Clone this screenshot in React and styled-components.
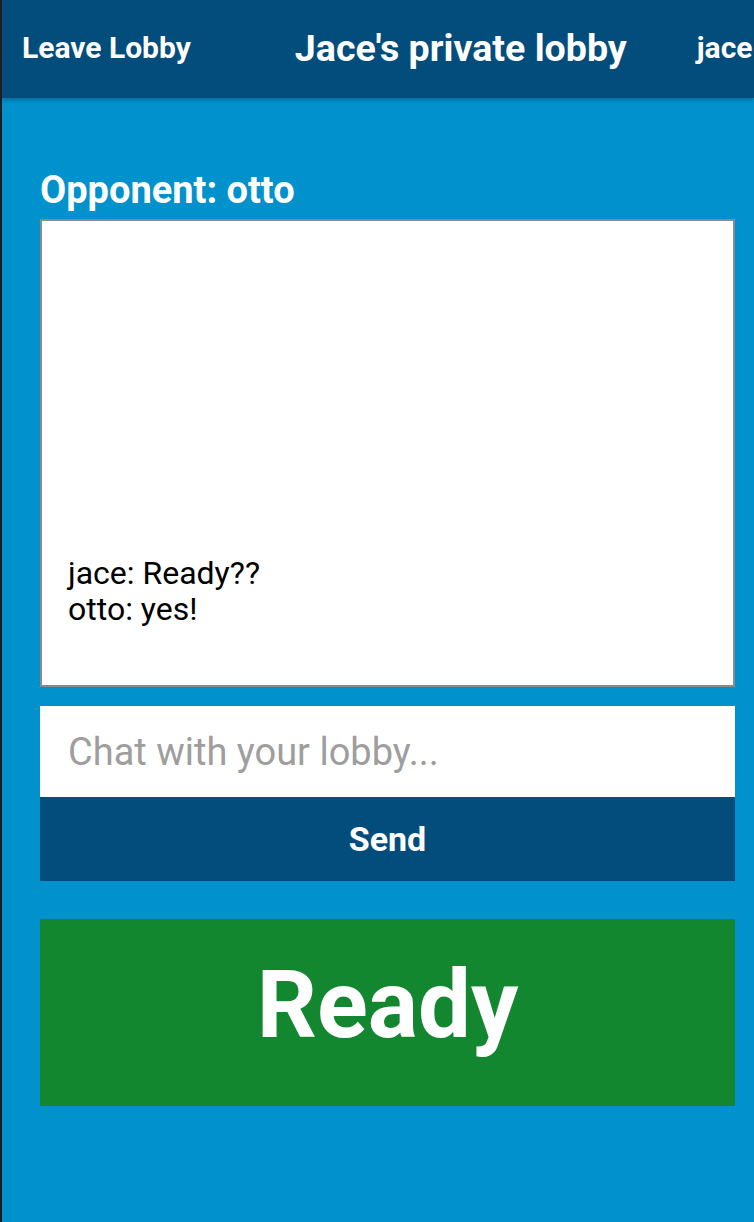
import React from 'react'
import styled, { createGlobalStyle } from 'styled-components'

const GlobalStyle = createGlobalStyle`
  html, body {
    margin: 0;
    padding: 0;
    background: #0191cd;
  }
  body {
    font-family: Roboto, "Noto Sans", sans-serif;
  }
  * {
    box-sizing: border-box;
  }
`

const Page = styled.div`
  min-height: 1222px;
  background: #0191cd;
  border-left: 2px solid #1b1f23;
  overflow: hidden;
`
const Header = styled.div`
  height: 98px;
  background: #034d7c;
  display: flex;
  align-items: center;
  padding-left: 20px;
  box-shadow: 0 2px 4px rgba(0, 0, 0, 0.25);
  white-space: nowrap;
  position: relative;
  z-index: 1;
`
const NavLink = styled.div`
  color: #fff;
  font-weight: 700;
  font-size: 30px;
  margin-bottom: 4px;
`
const Title = styled.div`
  color: #fff;
  font-weight: 700;
  font-size: 37.6px;
  margin-left: 104px;
  margin-bottom: 2px;
`
const UserName = styled(NavLink)`
  margin-left: 70px;
`
const Content = styled.div`
  padding: 70px 19px 0 38px;
  display: flex;
  flex-direction: column;
`
const Opponent = styled.div`
  color: #fff;
  font-weight: 700;
  font-size: 38px;
  line-height: 44px;
  margin-bottom: 7px;
`
const ChatLog = styled.div`
  height: 468px;
  background: #fff;
  border: 2px solid #8a8a8a;
  display: flex;
  flex-direction: column;
  justify-content: flex-end;
  padding: 0 26px 58px;
`
const Message = styled.div`
  font-size: 32px;
  line-height: 36px;
  color: #000;
`
const Input = styled.input`
  margin-top: 19px;
  height: 91px;
  border: none;
  outline: none;
  padding: 0 28px;
  font-family: Roboto, sans-serif;
  font-size: 38px;
  background: #fff;
  &::placeholder {
    color: #9e9e9e;
  }
`
const SendButton = styled.button`
  height: 84px;
  border: none;
  background: #034d7c;
  color: #fff;
  font-family: Roboto, sans-serif;
  font-weight: 700;
  font-size: 34px;
`
const ReadyButton = styled.button`
  margin-top: 38px;
  height: 187px;
  padding: 0 0 16px;
  border: none;
  background: #138630;
  color: #fff;
  font-family: Roboto, sans-serif;
  font-weight: 700;
  font-size: 94px;
`

export default function App() {
  return (
    <Page>
      <GlobalStyle />
      <Header>
        <NavLink>Leave Lobby</NavLink>
        <Title>Jace's private lobby</Title>
        <UserName>jace</UserName>
      </Header>
      <Content>
        <Opponent>Opponent: otto</Opponent>
        <ChatLog>
          <Message>jace: Ready??</Message>
          <Message>otto: yes!</Message>
        </ChatLog>
        <Input placeholder="Chat with your lobby..." />
        <SendButton>Send</SendButton>
        <ReadyButton>Ready</ReadyButton>
      </Content>
    </Page>
  )
}
